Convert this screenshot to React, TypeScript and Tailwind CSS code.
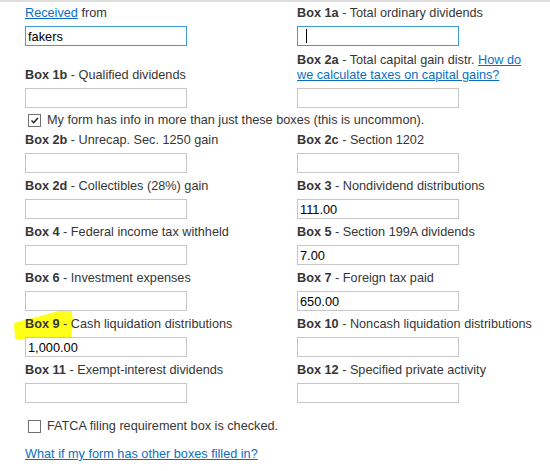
import { ReactNode } from "react";

interface FieldProps {
        box?: string,
        label: ReactNode,
        value?: string,
        focused?: boolean,
        caret?: boolean,
}

const Field = ({ box, label, value, focused, caret }: FieldProps) => {
        return <div className="flex flex-col">
                <div className="w-[240px] leading-[15px] mb-[5px]">
                        { box && <span className="font-bold">{ box }</span> }
                        { box && " - " }
                        { label }
                </div>
                <div className="relative w-[162px] h-[20px]">
                        <input readOnly value={ value ?? "" } className={`w-full h-full bg-white px-[2px] text-[12.8px] text-black outline-none border ${ focused ? "border-[#3d9be0]" : "border-[#c6c6c6]" }`} />
                        { caret && <span className="absolute left-[9px] top-[3px] w-px h-[14px] bg-black"></span> }
                </div>
        </div>
}

const Check = ({ checked }: { checked: boolean }) => {
        return <span className="w-[13px] h-[13px] border border-[#6f6f6f] bg-white flex items-center justify-center shrink-0">
                { checked && <svg width="9" height="9" viewBox="0 0 9 9">
                        <path d="M1.5 4.5 L3.7 6.7 L7.8 2" stroke="#222" strokeWidth="1.5" fill="none" />
                </svg> }
        </span>
}

const Link = ({ children }: { children: ReactNode }) => <a href="#" className="text-[#0a6fc2] underline">{ children }</a>

export default function App() {
        return <div className="relative w-[550px] h-[471px] bg-white border-t-2 border-[#dedede] text-[12.7px] text-[#363636] font-['Liberation_Sans',Arial,sans-serif] overflow-hidden">
                <svg className="absolute left-0 top-0" width="550" height="471">
                        <path d="M14 321 C25 318 40 314 55 310 L71 306 L73 318 L72 331 L70 339 C58 337 40 336 28 337 L15 337 Z" fill="#ffff1a" />
                </svg>
                <div className="relative pl-[25px] pt-[4px]">
                        <div className="grid grid-cols-[272px_1fr] items-end gap-y-[7px]">
                                <Field label={ <><Link>Received</Link> from</> } value="fakers" focused />
                                <Field box="Box 1a" label="Total ordinary dividends" focused caret />
                                <Field box="Box 1b" label="Qualified dividends" />
                                <Field box="Box 2a" label={ <>Total capital gain distr. <Link>How do we calculate taxes on capital gains?</Link></> } />
                        </div>
                        <div className="flex items-center gap-[6px] pl-[3px] mt-[5px] leading-[14px]">
                                <Check checked />
                                <span>My form has info in more than just these boxes (this is uncommon).</span>
                        </div>
                        <div className="grid grid-cols-[272px_1fr] items-end gap-y-[6px] mt-[6px]">
                                <Field box="Box 2b" label="Unrecap. Sec. 1250 gain" />
                                <Field box="Box 2c" label="Section 1202" />
                                <Field box="Box 2d" label="Collectibles (28%) gain" />
                                <Field box="Box 3" label="Nondividend distributions" value="111.00" />
                                <Field box="Box 4" label="Federal income tax withheld" />
                                <Field box="Box 5" label="Section 199A dividends" value="7.00" />
                                <Field box="Box 6" label="Investment expenses" />
                                <Field box="Box 7" label="Foreign tax paid" value="650.00" />
                                <Field box="Box 9" label="Cash liquidation distributions" value="1,000.00" />
                                <Field box="Box 10" label="Noncash liquidation distributions" />
                                <Field box="Box 11" label="Exempt-interest dividends" />
                                <Field box="Box 12" label="Specified private activity" />
                        </div>
                        <div className="flex items-center gap-[6px] pl-[3px] mt-[16px] leading-[14px]">
                                <Check checked={ false } />
                                <span>FATCA filing requirement box is checked.</span>
                        </div>
                        <div className="mt-[14px] leading-[15px]">
                                <Link>What if my form has other boxes filled in?</Link>
                        </div>
                </div>
        </div>
}
